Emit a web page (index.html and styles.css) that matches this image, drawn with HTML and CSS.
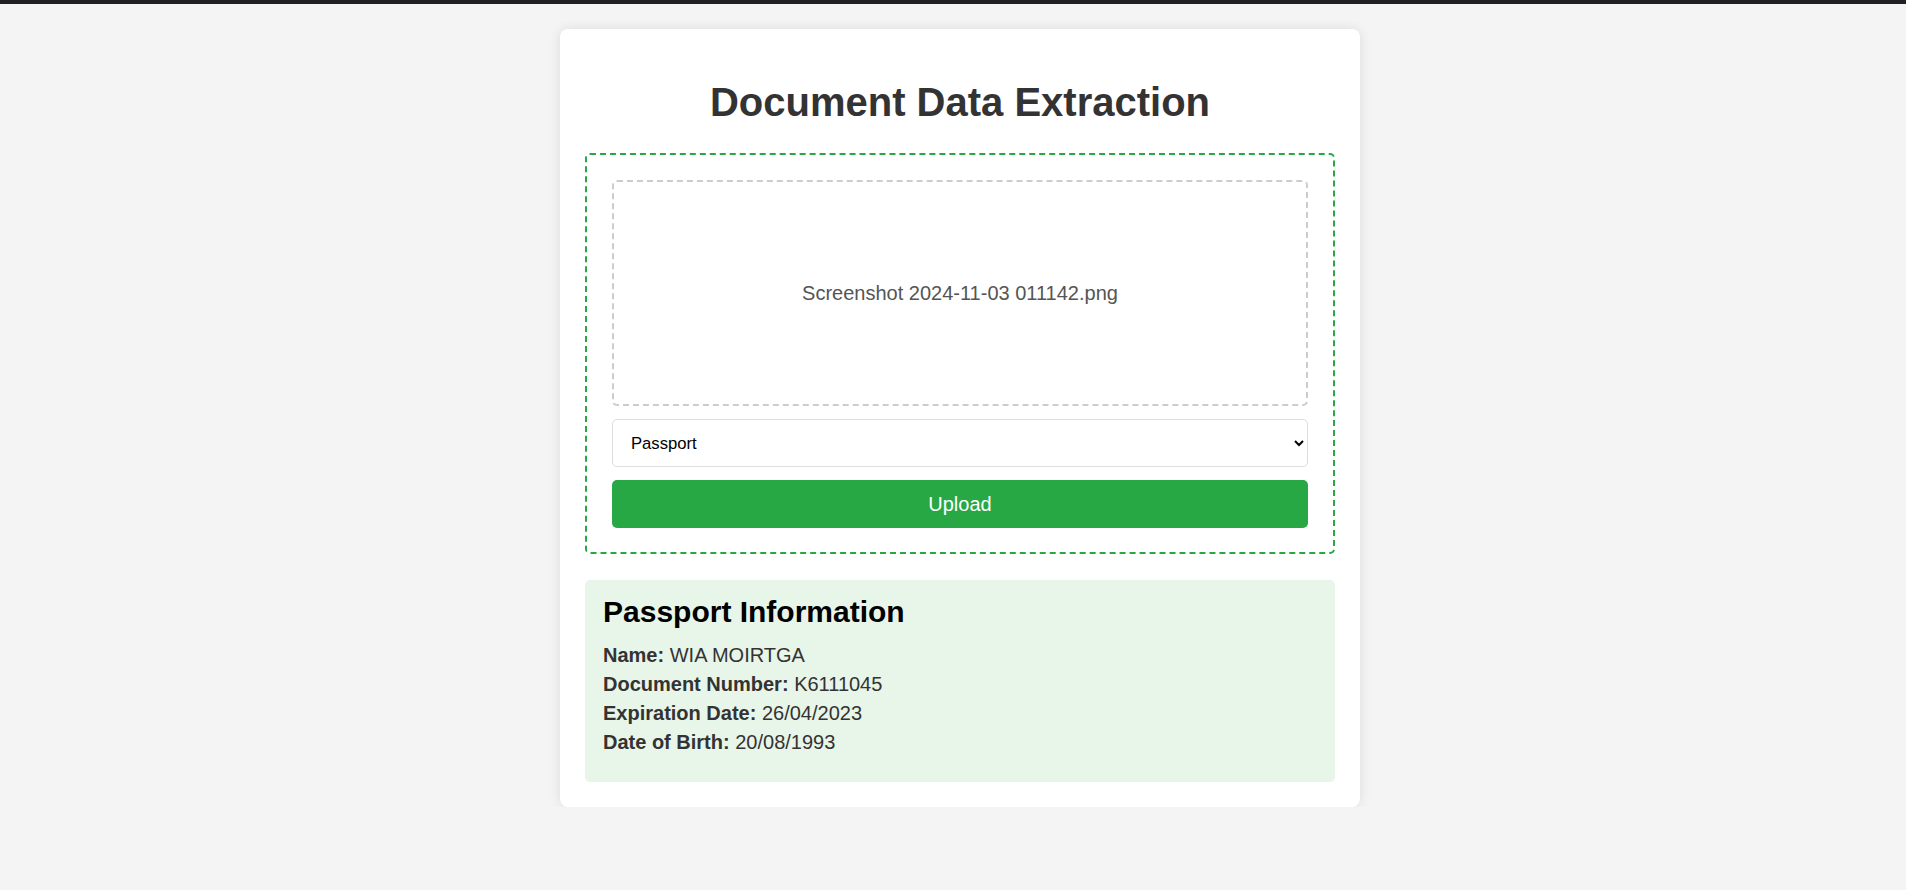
FILE: index.html
```html
<!DOCTYPE html>
<html lang="en">
<head>
<meta charset="utf-8">
<title>Document Data Extraction</title>
<link rel="stylesheet" href="styles.css">
</head>
<body>
<div class="topbar"></div>
<div class="page">
  <div class="card">
    <h1 class="title">Document Data Extraction</h1>
    <form class="upload-box">
      <div class="dropzone">Screenshot 2024-11-03 011142.png</div>
      <select class="doc-type">
        <option>Passport</option>
        <option>ID Card</option>
        <option>Driver License</option>
      </select>
      <button type="button" class="upload-btn">Upload</button>
    </form>
    <div class="result">
      <h2 class="result-title">Passport Information</h2>
      <div class="row"><strong>Name:</strong> WIA MOIRTGA</div>
      <div class="row"><strong>Document Number:</strong> K6111045</div>
      <div class="row"><strong>Expiration Date:</strong> 26/04/2023</div>
      <div class="row"><strong>Date of Birth:</strong> 20/08/1993</div>
    </div>
  </div>
</div>
</body>
</html>
```
FILE: styles.css
```css
* { box-sizing: border-box; }
html, body { margin: 0; padding: 0; }
body {
  background: #f4f4f4;
  font-family: "Liberation Sans", Arial, sans-serif;
  font-size: 20px;
  color: #333;
}
.topbar {
  height: 4px;
  background: #202124;
}
.page {
  display: flex;
  justify-content: center;
  padding: 25px 0 0 14px;
}
.card {
  width: 800px;
  background: #fff;
  border-radius: 8px;
  box-shadow: 0 0 12px rgba(0, 0, 0, 0.1);
  padding: 25px;
}
.title {
  margin: 25px 0 28px;
  font-size: 40px;
  line-height: 46px;
  font-weight: bold;
  text-align: center;
  color: #333;
}
.upload-box {
  border: 2px dashed #28a745;
  border-radius: 5px;
  padding: 25px 25px 24px;
  display: flex;
  flex-direction: column;
  margin: 0;
}
.dropzone {
  border: 2px dashed #ccc;
  border-radius: 5px;
  height: 226px;
  display: flex;
  align-items: center;
  justify-content: center;
  color: #555;
  font-size: 20px;
  line-height: 23px;
}
.doc-type {
  margin-top: 13px;
  height: 48px;
  border: 1px solid #ddd;
  border-radius: 5px;
  background: #fff;
  padding: 0 12px 0 14px;
  font-family: "Liberation Sans", Arial, sans-serif;
  font-size: 16.67px;
  color: #000;
}
.upload-btn {
  margin-top: 13px;
  height: 48px;
  border: none;
  border-radius: 5px;
  background: #28a745;
  color: #fff;
  font-family: "Liberation Sans", Arial, sans-serif;
  font-size: 20px;
}
.result {
  margin-top: 26px;
  background: #e8f5e9;
  border-radius: 5px;
  padding: 15px 18px 24px;
}
.result-title {
  margin: 0 0 11.5px;
  font-size: 30px;
  line-height: 34px;
  color: #000;
}
.row {
  line-height: 29.3px;
  color: #333;
}
.row strong { font-weight: bold; }
```
